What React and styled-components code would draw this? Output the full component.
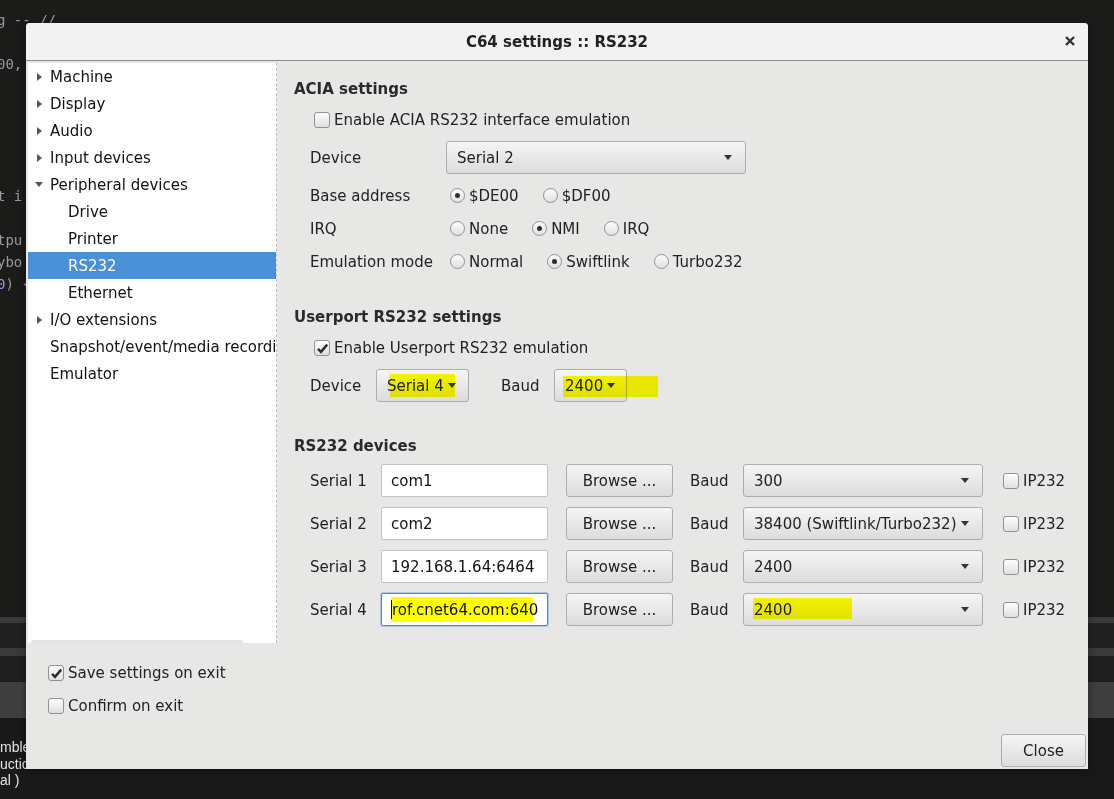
import React from "react"
import styled, { createGlobalStyle } from "styled-components"

const GlobalStyle = createGlobalStyle`
  html, body {
    margin: 0;
    padding: 0;
    background: #1b1b1a;
  }
  body {
    width: 1114px;
    height: 799px;
    overflow: hidden;
    font-family: "DejaVu Sans", "Liberation Sans", sans-serif;
  }
`

/* ---------- backdrop (editor behind the dialog) ---------- */

const Screen = styled.div`
  position: relative;
  width: 1114px;
  height: 799px;
  overflow: hidden;
  display: flex;
  flex-direction: column;
  background: #1b1b1a;
`

const Editor = styled.div`
  height: 617px;
  padding-top: 9px;
  box-sizing: border-box;
  font-family: "DejaVu Sans Mono", monospace;
  font-size: 14px;
  line-height: 22px;
  color: #9a9a9a;
  white-space: pre;
`

const CodeLine = styled.div`
  height: 22px;
  margin-left: -3px;
`

const Purple = styled.span`
  color: #b38de0;
`

const Strip = styled.div`
  height: ${(p) => p.$h}px;
  background: ${(p) => p.$bg};
`

const Terminal = styled.div`
  flex: 1;
  background: #191919;
  padding-top: 21px;
  font-family: "Liberation Sans", sans-serif;
  font-size: 14px;
  line-height: 16.5px;
  color: #e4e4e4;
  white-space: pre;
`

/* ---------- dialog ---------- */

const Dialog = styled.div`
  position: absolute;
  left: 26px;
  top: 23px;
  width: 1062px;
  height: 746px;
  display: flex;
  flex-direction: column;
  background: #e7e7e6;
  border-radius: 4px 4px 0 0;
  box-shadow: 0 2px 8px rgba(0, 0, 0, 0.4);
  color: #222;
  font-size: 15px;
`

const TitleBar = styled.div`
  position: relative;
  height: 37px;
  flex-shrink: 0;
  display: flex;
  align-items: center;
  justify-content: center;
  background: #f2f2f2;
  border-bottom: 1px solid #8d8d8d;
  border-radius: 4px 4px 0 0;
  font-weight: bold;
  font-size: 15px;
  color: #222;
`

const CloseX = styled.button`
  position: absolute;
  right: 12px;
  top: 12px;
  width: 12px;
  height: 12px;
  padding: 0;
  border: 0;
  background: none;
  display: flex;
`

const Body = styled.div`
  flex: 1;
  display: flex;
  flex-direction: column;
  padding: 2px;
`

const Main = styled.div`
  display: flex;
  height: 580px;
`

/* ---------- tree ---------- */

const Tree = styled.div`
  position: relative;
  width: 249px;
  box-sizing: border-box;
  background: #fff;
  border-right: 1px dashed #bcbcbc;
  overflow: hidden;
  white-space: nowrap;
  color: #111;
`

const TreeRow = styled.div`
  height: 27px;
  display: flex;
  align-items: center;
  gap: 5px;
  padding-left: ${(p) => p.$indent}px;
  background: ${(p) => (p.$selected ? "#4a90d9" : "transparent")};
  color: ${(p) => (p.$selected ? "#fff" : "#111")};
`

const ArrowBox = styled.span`
  width: 12px;
  display: flex;
  justify-content: center;
  align-items: center;
`

const RightTri = styled.span`
  width: 0;
  height: 0;
  border-top: 4.5px solid transparent;
  border-bottom: 4.5px solid transparent;
  border-left: 5px solid #555;
`

const DownTri = styled.span`
  width: 0;
  height: 0;
  border-left: 4.5px solid transparent;
  border-right: 4.5px solid transparent;
  border-top: 5px solid #555;
`

const HScroll = styled.div`
  position: absolute;
  left: 3px;
  bottom: 0;
  width: 212px;
  height: 3px;
  border-radius: 2px;
  background: #e4e4e4;
`

/* ---------- settings content ---------- */

const Content = styled.div`
  flex: 1;
  padding: 16px 0 0 17px;
  display: flex;
  flex-direction: column;
`

const Heading = styled.div`
  height: 20px;
  line-height: 20px;
  font-weight: bold;
  color: #2a2a2a;
  margin-top: ${(p) => p.$mt || 0}px;
`

const CheckRow = styled.label`
  height: 22px;
  display: flex;
  align-items: center;
  gap: 4px;
  padding-left: ${(p) => p.$indent}px;
  margin-top: ${(p) => p.$mt || 0}px;
`

const Box = styled.span`
  width: 16px;
  height: 16px;
  box-sizing: border-box;
  border: 1px solid #929292;
  border-radius: 3px;
  background: linear-gradient(#fdfdfd, #e0e0e0);
  display: flex;
  align-items: center;
  justify-content: center;
  flex-shrink: 0;
`

const FormRow = styled.div`
  display: grid;
  grid-template-columns: 136px 1fr;
  align-items: center;
  height: 33px;
  padding-left: 16px;
  margin-top: ${(p) => p.$mt || 0}px;
`

const RadioGroup = styled.div`
  display: flex;
  align-items: center;
  gap: 24px;
  padding-left: 4px;
`

const RadioItem = styled.span`
  display: flex;
  align-items: center;
  gap: 4px;
`

const Circle = styled.span`
  width: 15px;
  height: 15px;
  box-sizing: border-box;
  border: 1px solid #929292;
  border-radius: 50%;
  background: linear-gradient(#fdfdfd, #e0e0e0);
  display: flex;
  align-items: center;
  justify-content: center;
  flex-shrink: 0;
`

const Dot = styled.span`
  width: 5px;
  height: 5px;
  border-radius: 50%;
  background: #2e2e2e;
`

const Combo = styled.div`
  position: relative;
  width: ${(p) => p.$w}px;
  height: 33px;
  box-sizing: border-box;
  display: flex;
  align-items: center;
  justify-content: ${(p) => (p.$compact ? "flex-start" : "space-between")};
  gap: 4px;
  padding: 0 13px 0 10px;
  border: 1px solid #adadad;
  border-radius: 3px;
  background: linear-gradient(#f5f5f5, #dcdcdc);
  color: #222;
  white-space: nowrap;
`

const ComboArrow = styled.span`
  width: 0;
  height: 0;
  border-left: 4.5px solid transparent;
  border-right: 4.5px solid transparent;
  border-top: 5px solid #333;
  flex-shrink: 0;
`

const Highlight = styled.span`
  position: absolute;
  left: ${(p) => p.$l}px;
  top: ${(p) => p.$t}px;
  width: ${(p) => p.$w}px;
  height: ${(p) => p.$h}px;
  background: #ffff00;
  mix-blend-mode: multiply;
  pointer-events: none;
`

const InlineRow = styled.div`
  display: flex;
  align-items: center;
  height: 33px;
  padding-left: 16px;
  margin-top: ${(p) => p.$mt || 0}px;
`

const FixedLabel = styled.span`
  width: ${(p) => p.$w}px;
  margin-left: ${(p) => p.$ml || 0}px;
  flex-shrink: 0;
`

const DeviceRow = styled.div`
  display: grid;
  grid-template-columns: 71px 185px 124px 53px 260px auto;
  align-items: center;
  height: 33px;
  padding-left: 16px;
  margin-top: ${(p) => p.$mt}px;
`

const Field = styled.div`
  position: relative;
  width: 167px;
  height: 33px;
  box-sizing: border-box;
  display: flex;
  align-items: center;
  padding: 0 9px;
  background: #fff;
  border: 1px solid ${(p) => (p.$focus ? "#3d8ee3" : "#c3c3c3")};
  box-shadow: ${(p) => (p.$focus ? "0 0 0 1px rgba(61,142,227,0.35)" : "none")};
  border-radius: 2px;
  color: #111;
  overflow: hidden;
  white-space: nowrap;
`

const FieldClip = styled.span`
  position: relative;
  flex: 1;
  overflow: hidden;
  display: flex;
  align-items: center;
  height: 100%;
`

const Caret = styled.span`
  width: 1px;
  height: 19px;
  background: #111;
  flex-shrink: 0;
`

const Button = styled.button`
  width: ${(p) => p.$w}px;
  height: 33px;
  padding: 0;
  border: 1px solid #adadad;
  border-radius: 3px;
  background: linear-gradient(#f5f5f5, #dcdcdc);
  font-family: "DejaVu Sans", sans-serif;
  font-size: 15px;
  color: #222;
`

const Footer = styled.div`
  padding-left: 20px;
  padding-top: 19px;
  display: flex;
  flex-direction: column;
  gap: 11px;
`

const ButtonBar = styled.div`
  margin-top: auto;
  display: flex;
  justify-content: flex-end;
`

/* ---------- small parts ---------- */

const CheckMark = () => (
  <svg width="13" height="13" viewBox="0 0 13 13">
    <path d="M2 6.8 L5 9.8 L11.2 2.6" fill="none" stroke="#2b2b2b" strokeWidth="2.5" />
  </svg>
)

const Check = ({ checked, label, indent = 0, mt }) => (
  <CheckRow $indent={indent} $mt={mt}>
    <Box>{checked && <CheckMark />}</Box>
    {label}
  </CheckRow>
)

const Radio = ({ checked, label }) => (
  <RadioItem>
    <Circle>{checked && <Dot />}</Circle>
    {label}
  </RadioItem>
)

const treeItems = [
  { label: "Machine", arrow: "right" },
  { label: "Display", arrow: "right" },
  { label: "Audio", arrow: "right" },
  { label: "Input devices", arrow: "right" },
  { label: "Peripheral devices", arrow: "down" },
  { label: "Drive", child: true },
  { label: "Printer", child: true },
  { label: "RS232", child: true, selected: true },
  { label: "Ethernet", child: true },
  { label: "I/O extensions", arrow: "right" },
  { label: "Snapshot/event/media recording" },
  { label: "Emulator" },
]

const devices = [
  { name: "Serial 1", path: "com1", baud: "300" },
  { name: "Serial 2", path: "com2", baud: "38400 (Swiftlink/Turbo232)" },
  { name: "Serial 3", path: "192.168.1.64:6464", baud: "2400" },
  { name: "Serial 4", path: "rof.cnet64.com:6400", baud: "2400", focus: true },
]

const App = () => {
  return (
    <Screen>
      <GlobalStyle />
      <Editor>
        <CodeLine>g -- //</CodeLine>
        <CodeLine />
        <CodeLine>00,</CodeLine>
        <CodeLine />
        <CodeLine />
        <CodeLine />
        <CodeLine />
        <CodeLine />
        <CodeLine>t i</CodeLine>
        <CodeLine />
        <CodeLine>tpu</CodeLine>
        <CodeLine>ybo</CodeLine>
        <CodeLine>
          <Purple>0</Purple>) {"{"}
        </CodeLine>
      </Editor>
      <Strip $h={6} $bg="#3b3b3b" />
      <Strip $h={25} $bg="#212121" />
      <Strip $h={8} $bg="#3a3a3a" />
      <Strip $h={26} $bg="#1f1f1f" />
      <Strip $h={36} $bg="#3f3f3f" />
      <Terminal>
        <div>mble</div>
        <div>uctio</div>
        <div>al )</div>
      </Terminal>

      <Dialog>
        <TitleBar>
          C64 settings :: RS232
          <CloseX aria-label="close">
            <svg width="12" height="12" viewBox="0 0 12 12">
              <path d="M2 2 L10 10 M10 2 L2 10" stroke="#333" strokeWidth="2.4" />
            </svg>
          </CloseX>
        </TitleBar>
        <Body>
          <Main>
            <Tree>
              {treeItems.map((item) => (
                <TreeRow
                  key={item.label}
                  $indent={item.child ? 40 : item.arrow ? 5 : 22}
                  $selected={item.selected}
                >
                  {item.arrow && (
                    <ArrowBox>{item.arrow === "down" ? <DownTri /> : <RightTri />}</ArrowBox>
                  )}
                  {item.label}
                </TreeRow>
              ))}
              <HScroll />
            </Tree>

            <Content>
              <Heading>ACIA settings</Heading>
              <Check label="Enable ACIA RS232 interface emulation" indent={20} mt={10} />
              <FormRow $mt={10}>
                <span>Device</span>
                <Combo $w={300}>
                  Serial 2
                  <ComboArrow />
                </Combo>
              </FormRow>
              <FormRow $mt={5}>
                <span>Base address</span>
                <RadioGroup>
                  <Radio checked label="$DE00" />
                  <Radio label="$DF00" />
                </RadioGroup>
              </FormRow>
              <FormRow>
                <span>IRQ</span>
                <RadioGroup>
                  <Radio label="None" />
                  <Radio checked label="NMI" />
                  <Radio label="IRQ" />
                </RadioGroup>
              </FormRow>
              <FormRow>
                <span>Emulation mode</span>
                <RadioGroup>
                  <Radio label="Normal" />
                  <Radio checked label="Swiftlink" />
                  <Radio label="Turbo232" />
                </RadioGroup>
              </FormRow>

              <Heading $mt={29}>Userport RS232 settings</Heading>
              <Check checked label="Enable Userport RS232 emulation" indent={20} mt={10} />
              <InlineRow $mt={10}>
                <FixedLabel $w={66}>Device</FixedLabel>
                <Combo $w={93} $compact>
                  Serial 4
                  <ComboArrow />
                  <Highlight $l={13} $t={4} $w={65} $h={23} />
                </Combo>
                <FixedLabel $w={53} $ml={32}>
                  Baud
                </FixedLabel>
                <Combo $w={73} $compact>
                  2400
                  <ComboArrow />
                  <Highlight $l={8} $t={6} $w={95} $h={21} />
                </Combo>
              </InlineRow>

              <Heading $mt={34}>RS232 devices</Heading>
              {devices.map((d, i) => (
                <DeviceRow key={d.name} $mt={i === 0 ? 8 : 10}>
                  <span>{d.name}</span>
                  <Field $focus={d.focus}>
                    {d.focus ? (
                      <FieldClip>
                        <Caret />
                        {d.path}
                        <Highlight $l={0} $t={3} $w={142} $h={25} />
                      </FieldClip>
                    ) : (
                      d.path
                    )}
                  </Field>
                  <Button $w={107}>Browse ...</Button>
                  <span>Baud</span>
                  <Combo $w={240}>
                    {d.baud}
                    <ComboArrow />
                    {d.focus && <Highlight $l={9} $t={4} $w={99} $h={21} />}
                  </Combo>
                  <Check label="IP232" />
                </DeviceRow>
              ))}
            </Content>
          </Main>

          <Footer>
            <Check checked label="Save settings on exit" />
            <Check label="Confirm on exit" />
          </Footer>
          <ButtonBar>
            <Button $w={85}>Close</Button>
          </ButtonBar>
        </Body>
      </Dialog>
    </Screen>
  )
}

export default App
